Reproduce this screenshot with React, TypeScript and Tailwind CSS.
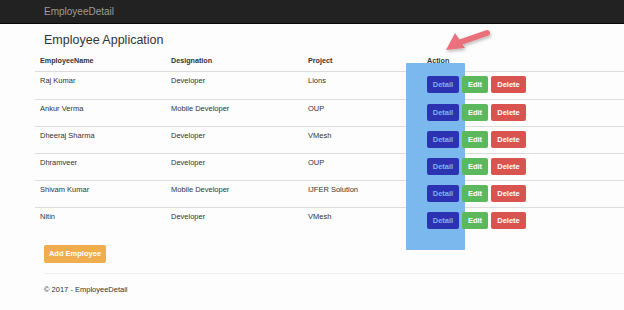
const employees = [
  { name: "Raj Kumar", designation: "Developer", project: "Lions" },
  { name: "Ankur Verma", designation: "Mobile Developer", project: "OUP" },
  { name: "Dheeraj Sharma", designation: "Developer", project: "VMesh" },
  { name: "Dhramveer", designation: "Developer", project: "OUP" },
  { name: "Shivam Kumar", designation: "Mobile Developer", project: "IJFER Solution" },
  { name: "Nitin", designation: "Developer", project: "VMesh" },
];

const cols = "grid grid-cols-[131px_137px_119px_1fr]";

export default function App() {
  return (
    <div className="relative w-[624px] h-[310px] overflow-hidden bg-[#fdfdfd] font-['Liberation_Sans',Arial,sans-serif] text-[#333]">
      <div className="h-[24px] bg-[#222] border-b border-[#080808] flex items-center pl-[44px]">
        <span className="text-[10px] text-[#9d9d9d]">EmployeeDetail</span>
      </div>

      <div className="pl-[44px] pt-[8px] h-[24px] text-[12.5px] leading-[16px] text-[#333]">Employee Application</div>

      <div className="ml-[35px] relative">
        <div className={`${cols} h-[24px] border-b border-[#ddd] items-end pb-[5px] text-[7.2px] leading-[10px] font-bold`}>
          <div className="pl-[5px]">EmployeeName</div>
          <div className="pl-[5px]">Designation</div>
          <div className="pl-[5px]">Project</div>
          <div className="pl-[5px] relative z-10">Action</div>
        </div>
        {employees.map((e, i) => (
          <div
            key={e.name}
            className={`${cols} h-[27px] pt-[4px] text-[7.5px] leading-[10px] ${i > 0 ? "border-t border-[#ddd]" : ""}`}
          >
            <div className="pl-[5px]">{e.name}</div>
            <div className="pl-[5px]">{e.designation}</div>
            <div className="pl-[5px]">{e.project}</div>
            <div className="pl-[5px] flex gap-[3px] relative z-10">
              <button className="w-[32px] h-[17px] rounded-[2px] bg-[#2b33b3] text-[#7fb2f0] text-[7.5px] font-bold">Detail</button>
              <button className="w-[26px] h-[17px] rounded-[2px] bg-[#5cb85c] text-white text-[7.5px] font-bold">Edit</button>
              <button className="w-[35px] h-[17px] rounded-[2px] bg-[#d9534f] text-white text-[7.5px] font-bold">Delete</button>
            </div>
          </div>
        ))}
      </div>

      <div className="pl-[44px] mt-[11px] flex">
        <button className="w-[62px] h-[18px] rounded-[2px] bg-[#f0ad4e] text-white text-[7.5px] font-bold">Add Employee</button>
      </div>

      <div className="ml-[44px] mt-[10px] border-t border-[#eee]" />
      <div className="pl-[44px] pt-[11px] text-[7.5px] leading-[10px]">© 2017 - EmployeeDetail</div>

      <div className="absolute left-[406px] top-[63px] w-[59px] h-[187px] bg-[#7ab8ee] rounded-[1px]" />

      <svg className="absolute left-[438px] top-[24px]" width="60" height="34" viewBox="0 0 60 34">
        <defs>
          <filter id="sh" x="-20%" y="-20%" width="140%" height="160%">
            <feDropShadow dx="1" dy="2" stdDeviation="1.5" floodColor="#000" floodOpacity="0.25" />
          </filter>
        </defs>
        <g filter="url(#sh)">
          <line x1="49" y1="9" x2="20" y2="19" stroke="#e9717c" strokeWidth="6" strokeLinecap="round" />
          <polygon points="8,26 17,9 27,24" fill="#e9717c" />
        </g>
      </svg>
    </div>
  );
}
